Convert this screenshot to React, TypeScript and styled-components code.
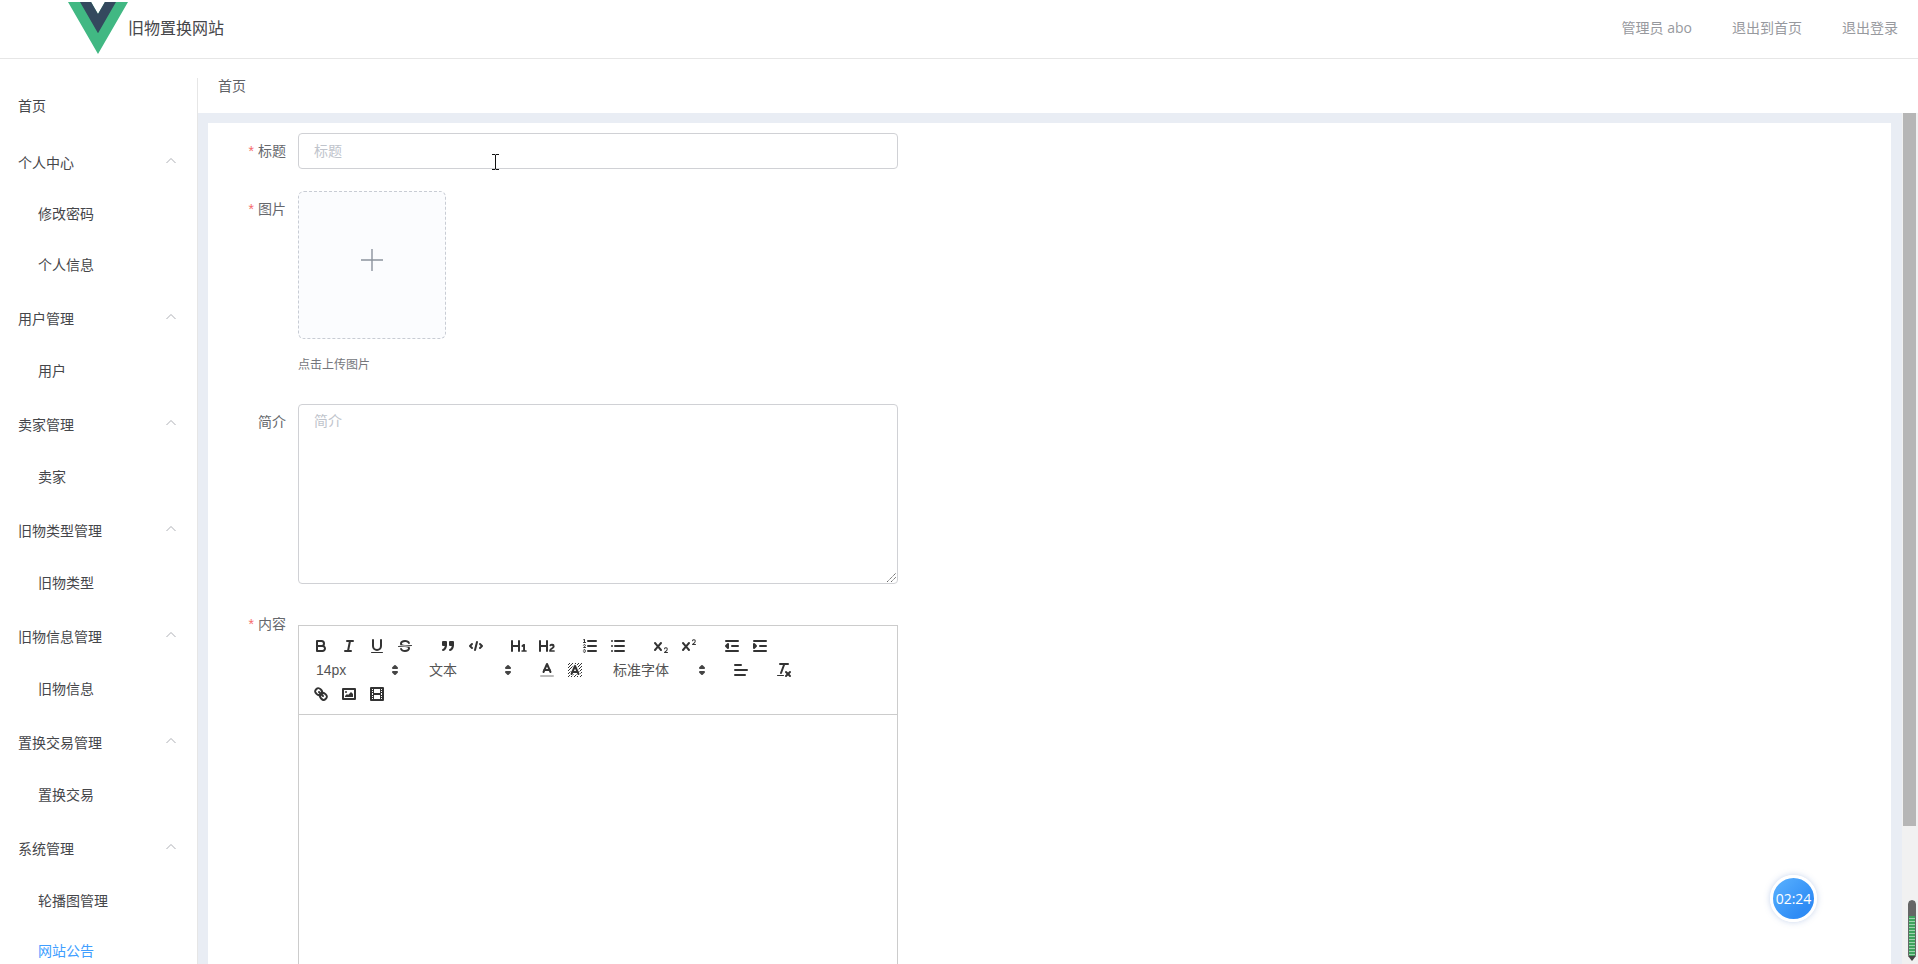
import React from 'react';
import styled, { createGlobalStyle } from 'styled-components';

const Global = createGlobalStyle`
  html, body { margin: 0; padding: 0; height: 100%; overflow: hidden; background: #fff; }
  body { font-family: "Liberation Sans", "Noto Sans CJK SC", sans-serif; }
  * { box-sizing: border-box; }
`;

const Page = styled.div`
  height: 964px; display: flex; flex-direction: column; position: relative; overflow: hidden;
`;
const Header = styled.header`
  height: 59px; flex: none; display: flex; align-items: flex-start; justify-content: space-between;
  border-bottom: 1px solid #e6e6e6; padding: 2px 20px 0 68px;
`;
const Brand = styled.div`display: flex; align-items: flex-start;`;
const Logo = styled.svg`width: 60px; height: 52px; display: block;`;
const BrandTitle = styled.div`font-size: 16px; line-height: 52px; color: #45464a; margin-top: 1px;`;
const HeaderLinks = styled.nav`display: flex; gap: 40px; margin-top: -3px;`;
const HeaderLink = styled.span`
  font-family: "Open Sans", "Noto Sans CJK SC", sans-serif; font-size: 14px; line-height: 58px; color: #97999e;
`;

const Body = styled.div`flex: 1; min-height: 0; display: flex; padding-top: 19px;`;
const Side = styled.aside`width: 198px; flex: none; border-right: 1px solid #e6e6e6; overflow: hidden;`;
const MenuItem = styled.div<{ $sub?: boolean; $active?: boolean }>`
  height: ${p => (p.$sub ? 51 : 56)}px; line-height: ${p => (p.$sub ? (p.$active ? 49 : 51) : 56)}px; font-size: 14px;
  padding-left: ${p => (p.$sub ? 38 : 18)}px; color: ${p => (p.$active ? '#409eff' : '#45464a')};
`;
const MenuTitle = styled.div<{ $first?: boolean }>`
  height: 55px; font-size: 14px; padding: 0 20px ${p => (p.$first ? 0 : 2)}px 18px; color: #45464a;
  display: flex; align-items: center; justify-content: space-between;
`;
const Chevron = styled.svg`width: 12px; height: 12px; margin-top: -1px; color: #a3a6ad;`;

const Main = styled.main`flex: 1; min-width: 0; display: flex; flex-direction: column;`;
const Crumb = styled.div`height: 35px; flex: none; padding-left: 20px; font-size: 14px; line-height: 16px; color: #606266;`;
const Band = styled.div`flex: 1; min-height: 0; display: flex;`;
const Gutter = styled.div`
  flex: 1; min-width: 0; background: #e9edf4; padding: 10px 11px 0 10px; display: flex;
`;
const Card = styled.div`flex: 1; background: #fff; padding: 10px 0 0 0; overflow: hidden;`;
const ScrollTrack = styled.div`width: 16px; flex: none; background: #f1f1f1; padding-left: 1px;`;
const ScrollThumb = styled.div`width: 13px; height: 713px; background: #b6b6b6;`;

const Row = styled.div`display: flex; margin-bottom: 22px;`;
const Label = styled.label`
  width: 78px; flex: none; text-align: right; font-size: 14px; line-height: 36px; color: #66686d;
`;
const Star = styled.span`color: #f56c6c; margin-right: 4px;`;
const Control = styled.div`margin-left: 12px; width: 600px; flex: none; position: relative;`;
const Input = styled.div`
  height: 36px; border: 1px solid #d0d1d5; border-radius: 4px; padding-left: 15px;
  font-size: 14px; line-height: 34px; color: #c0c4cc;
`;
const Upload = styled.div`
  width: 148px; height: 148px; border: 1px dashed #c8ccd4; border-radius: 6px; background: #fbfcfe;
  display: flex; align-items: center; justify-content: center; padding-bottom: 11px;
`;
const Tip = styled.div`font-size: 12px; line-height: 36px; height: 36px; margin-top: 8px; margin-bottom: -1px; color: #75777c;`;
const Textarea = styled.div`
  height: 180px; border: 1px solid #d0d1d5; border-radius: 4px; padding: 5px 15px;
  font-size: 14px; line-height: 22px; color: #c0c4cc; position: relative;
`;
const Grip = styled.svg`position: absolute; right: 0; bottom: 0; width: 12px; height: 12px;`;
const IBeam = styled.svg`position: absolute; left: 194px; top: 21px; width: 7px; height: 16px;`;

const Editor = styled.div`margin-top: 19px; border: 1px solid #ccc; height: 500px;`;
const Toolbar = styled.div`
  display: flex; flex-wrap: wrap; padding: 8px; border-bottom: 1px solid #ccc; height: 89px; align-content: flex-start;
`;
const Formats = styled.span`display: inline-flex; margin-right: 15px; height: 24px; align-items: center;`;
const Btn = styled.span`
  width: 28px; height: 24px; padding: 3px 5px; display: block; flex: none;
  & svg { display: block; width: 18px; height: 18px; overflow: visible; }
  & .s { fill: none; stroke: #333; stroke-width: 2; stroke-linecap: round; stroke-linejoin: round; }
  & .t { fill: none; stroke: #333; stroke-width: 1; stroke-linecap: round; stroke-linejoin: round; }
  & .f { fill: #333; stroke: none; }
  & .sf { fill: #333; stroke: #333; stroke-width: 2; stroke-linejoin: round; stroke-linecap: round; }
  & .c { fill: none; stroke: #bbb; stroke-width: 2; stroke-linecap: round; }
`;
const Picker = styled.span<{ $w: number }>`
  width: ${p => p.$w}px; height: 24px; padding-left: 9px; position: relative; display: block;
  font-size: 14px; line-height: 24px; color: #555;
  & svg { position: absolute; right: 1px; top: 3px; width: 18px; height: 18px; }
  & polygon { fill: #444; stroke: #444; stroke-width: 2; stroke-linejoin: round; }
`;
const Timer = styled.div`
  position: absolute; left: 1770px; top: 875px; width: 47px; height: 47px; border-radius: 50%;
  border: 3px solid #fff; box-shadow: 0 0 6px rgba(90, 130, 200, .35);
  background:
    radial-gradient(ellipse 22px 5px at 60% 108%, rgba(190, 225, 255, .9) 60%, transparent 64%),
    linear-gradient(135deg, #5ab2ff, #2f8cf5 75%);
  color: #fff; font-family: "Open Sans", sans-serif; font-size: 14px;
  display: flex; align-items: center; justify-content: center;
`;
const Meter = styled.div`
  position: absolute; left: 1908px; top: 900px; width: 8px; height: 57px; border-radius: 4px 4px 2px 2px;
  border: 1px solid #666; overflow: hidden;
  background: linear-gradient(#666 0 15px, transparent 15px),
    repeating-linear-gradient(#3fa45f 0 2px, #9dd3ae 2px 3px);
`;
const MeterArrow = styled.svg`position: absolute; left: 1908px; top: 956px; width: 8px; height: 5px;`;

const B = () => <svg viewBox="0 0 18 18"><path className="s" d="M5,4H9.5A2.5,2.5,0,0,1,12,6.5v0A2.5,2.5,0,0,1,9.5,9H5A0,0,0,0,1,5,9V4A0,0,0,0,1,5,4Z"/><path className="s" d="M5,9h5.5A2.5,2.5,0,0,1,13,11.5v0A2.5,2.5,0,0,1,10.5,14H5a0,0,0,0,1,0,0V9A0,0,0,0,1,5,9Z"/></svg>;
const I = () => <svg viewBox="0 0 18 18"><line className="s" x1="7" x2="13" y1="4" y2="4"/><line className="s" x1="5" x2="11" y1="14" y2="14"/><line className="s" x1="8" x2="10" y1="14" y2="4"/></svg>;
const U = () => <svg viewBox="0 0 18 18"><path className="s" d="M5,3V9a4.012,4.012,0,0,0,4,4H9a4.012,4.012,0,0,0,4-4V3"/><rect className="f" height="1" rx="0.5" ry="0.5" width="12" x="3" y="15"/></svg>;
const Strike = () => <svg viewBox="0 0 18 18"><line className="t" x1="15.5" x2="2.5" y1="8.5" y2="9.5"/><path className="f" d="M9.007,8C6.542,7.791,6,7.519,6,6.5,6,5.792,7.283,5,9,5c1.571,0,2.765.679,2.969,1.309a1,1,0,0,0,1.9-.617C13.356,4.106,11.354,3,9,3,6.2,3,4,4.538,4,6.5a3.2,3.2,0,0,0,.5,1.843Z"/><path className="f" d="M8.984,10C11.457,10.208,12,10.479,12,11.5c0,.708-1.283,1.5-3,1.5-1.571,0-2.765-.679-2.969-1.309a1,1,0,1,0-1.9.617C4.644,13.894,6.646,15,9,15c2.8,0,5-1.538,5-3.5a3.2,3.2,0,0,0-.5-1.843Z"/></svg>;
const Quote = () => <svg viewBox="0 0 18 18"><rect className="sf" height="3" width="3" x="4" y="5"/><rect className="sf" height="3" width="3" x="11" y="5"/><path className="sf" d="M7,8c0,4.031-3,5-3,5"/><path className="sf" d="M14,8c0,4.031-3,5-3,5"/></svg>;
const Code = () => <svg viewBox="0 0 18 18"><polyline className="s" points="5 7 3 9 5 11"/><polyline className="s" points="13 7 15 9 13 11"/><line className="s" x1="10" x2="8" y1="5" y2="13"/></svg>;
const H1 = () => <svg viewBox="0 0 18 18"><path className="f" d="M10,4V14a1,1,0,0,1-2,0V10H3v4a1,1,0,0,1-2,0V4A1,1,0,0,1,3,4V8H8V4a1,1,0,0,1,2,0Zm6.06787,9.209H14.98975V7.59863a.54085.54085,0,0,0-.605-.60547h-.62744a1.01119,1.01119,0,0,0-.748.29688L11.645,8.56641a.5435.5435,0,0,0-.022.8584l.28613.30762a.53861.53861,0,0,0,.84717.0332l.09912-.08789a1.2137,1.2137,0,0,0,.2417-.35254h.02246s-.01123.30859-.01123.60547V13.209H12.041a.54085.54085,0,0,0-.605.60547v.43945a.54085.54085,0,0,0,.605.60547h4.02686a.54085.54085,0,0,0,.605-.60547v-.43945A.54085.54085,0,0,0,16.06787,13.209Z"/></svg>;
const H2 = () => <svg viewBox="0 0 18 18"><path className="f" d="M16.73975,13.81445v.43945a.54085.54085,0,0,1-.605.60547H11.855a.58392.58392,0,0,1-.64893-.60547V14.0127c0-2.90527,3.39941-3.42187,3.39941-4.55469a.77675.77675,0,0,0-.84717-.78125,1.17684,1.17684,0,0,0-.83594.38477c-.2749.26367-.561.374-.85791.13184l-.4292-.34082c-.30811-.24219-.38525-.51758-.1543-.81445a2.97155,2.97155,0,0,1,2.45361-1.17676,2.45393,2.45393,0,0,1,2.68408,2.40918c0,2.45312-3.1792,2.92676-3.27832,3.93848h2.79443A.54085.54085,0,0,1,16.73975,13.81445ZM9,3A.99974.99974,0,0,0,8,4V8H3V4A1,1,0,0,0,1,4V14a1,1,0,0,0,2,0V10H8v4a1,1,0,0,0,2,0V4A.99974.99974,0,0,0,9,3Z"/></svg>;
const Ordered = () => <svg viewBox="0 0 18 18"><line className="s" x1="7" x2="15" y1="4" y2="4"/><line className="s" x1="7" x2="15" y1="9" y2="9"/><line className="s" x1="7" x2="15" y1="14" y2="14"/><line className="t" x1="2.5" x2="4.5" y1="5.5" y2="5.5"/><path className="f" d="M3.5,6A0.5,0.5,0,0,1,3,5.5V3.085l-0.276.138A0.5,0.5,0,0,1,2.053,3c-0.124-.247-0.023-0.324.224-0.447l1-.5A0.5,0.5,0,0,1,4,2.5v3A0.5,0.5,0,0,1,3.5,6Z"/><path className="t" d="M4.5,10.5h-2c0-.234,1.85-1.076,1.85-2.234A0.959,0.959,0,0,0,2.5,8.156"/><path className="t" d="M2.5,14.846a0.959,0.959,0,0,0,1.85-.109A0.7,0.7,0,0,0,3.75,14a0.688,0.688,0,0,0,.6-0.736,0.959,0.959,0,0,0-1.85-.109"/></svg>;
const Bullet = () => <svg viewBox="0 0 18 18"><line className="s" x1="6" x2="15" y1="4" y2="4"/><line className="s" x1="6" x2="15" y1="9" y2="9"/><line className="s" x1="6" x2="15" y1="14" y2="14"/><line className="s" x1="3" x2="3" y1="4" y2="4"/><line className="s" x1="3" x2="3" y1="9" y2="9"/><line className="s" x1="3" x2="3" y1="14" y2="14"/></svg>;
const Sub = () => <svg viewBox="0 0 18 18"><path className="f" d="M15.5,15H13.861a3.858,3.858,0,0,0,1.914-2.975,1.8,1.8,0,0,0-1.6-1.751A1.921,1.921,0,0,0,12.021,11.7a0.50013,0.50013,0,1,0,.957.291h0a0.914,0.914,0,0,1,1.053-.725,0.81,0.81,0,0,1,.744.762c0,1.076-1.16971,1.86982-1.93971,2.43082A1.45639,1.45639,0,0,0,12,15.5a0.5,0.5,0,0,0,.5.5h3A0.5,0.5,0,0,0,15.5,15Z"/><path className="f" d="M9.65,5.241a1,1,0,0,0-1.409.108L6,7.964,3.759,5.349A1,1,0,0,0,2.192,6.59178Q2.21541,6.6213,2.241,6.651L4.684,9.5,2.241,12.35A1,1,0,0,0,3.71,13.70722q0.02557-.02768.049-0.05722L6,11.036,8.241,13.65a1,1,0,1,0,1.567-1.24277Q9.78459,12.3777,9.759,12.35L7.316,9.5,9.759,6.651A1,1,0,0,0,9.65,5.241Z"/></svg>;
const Sup = () => <svg viewBox="0 0 18 18"><path className="f" d="M15.5,7H13.861a4.015,4.015,0,0,0,1.914-2.975,1.8,1.8,0,0,0-1.6-1.751A1.922,1.922,0,0,0,12.021,3.7a0.5,0.5,0,1,0,.957.291,0.917,0.917,0,0,1,1.053-.725,0.81,0.81,0,0,1,.744.762c0,1.077-1.164,1.925-1.934,2.486A1.423,1.423,0,0,0,12,7.5a0.5,0.5,0,0,0,.5.5h3A0.5,0.5,0,0,0,15.5,7Z"/><path className="f" d="M9.651,5.241a1,1,0,0,0-1.41.108L6,7.964,3.759,5.349a1,1,0,1,0-1.519,1.3L4.683,9.5,2.241,12.35a1,1,0,1,0,1.519,1.3L6,11.036,8.241,13.65a1,1,0,0,0,1.519-1.3L7.317,9.5,9.759,6.651A1,1,0,0,0,9.651,5.241Z"/></svg>;
const Outdent = () => <svg viewBox="0 0 18 18"><line className="s" x1="3" x2="15" y1="14" y2="14"/><line className="s" x1="3" x2="15" y1="4" y2="4"/><line className="s" x1="9" x2="15" y1="9" y2="9"/><polyline className="sf" points="5 7 5 11 3 9 5 7"/></svg>;
const Indent = () => <svg viewBox="0 0 18 18"><line className="s" x1="3" x2="15" y1="14" y2="14"/><line className="s" x1="3" x2="15" y1="4" y2="4"/><line className="s" x1="9" x2="15" y1="9" y2="9"/><polyline className="sf" points="3 7 3 11 5 9 3 7"/></svg>;
const Color = () => <svg viewBox="0 0 18 18"><line className="c" x1="3" x2="15" y1="15" y2="15"/><polyline className="s" points="5.5 11 9 3 12.5 11"/><line className="s" x1="11.63" x2="6.38" y1="9" y2="9"/></svg>;
const bgRects: [number, number][] = [[4,4],[2,6],[3,5],[4,7],[2,12],[2,9],[2,15],[3,8],[12,2],[11,3],[2,3],[6,2],[3,2],[5,3],[9,2],[15,14],[13,7],[15,5],[14,6],[15,8],[14,9],[14,3],[15,2],[12,5],[13,4],[9,14],[8,15],[5,15],[11,15],[14,15],[15,11]];
const Background = () => <svg viewBox="0 0 18 18"><g className="f"><polygon points="6 6.868 6 6 5 6 5 7 5.942 7 6 6.868"/><polygon points="6.817 5 6 5 6 6 6.38 6 6.817 5"/><polygon points="4 11.439 4 11 3 11 3 12 3.755 12 4 11.439"/><polygon points="4.63 10 4 10 4 11 4.192 11 4.63 10"/><path d="M10.832,4.2L11,4.582V4H10.708A1.948,1.948,0,0,1,10.832,4.2Z"/><path d="M7,4.582L7.168,4.2A1.929,1.929,0,0,1,7.292,4H7V4.582Z"/><path d="M8,13H7.683l-0.351.8a1.933,1.933,0,0,1-.124.2H8V13Z"/><path d="M9,3H8V3.282A1.985,1.985,0,0,1,9,3Z"/><polygon points="13.447 10.174 13.469 10.225 13.472 10.232 13.808 11 14 11 14 10 13.37 10 13.447 10.174"/><path d="M3.775,14H3v1H4V14.314A1.97,1.97,0,0,1,3.775,14Z"/><polygon points="12 6.868 12 6 11.62 6 12 6.868"/><polygon points="12.933 9 13 9 13 8 12.495 8 12.933 9"/><path d="M6,14.926V15H7V14.316A1.993,1.993,0,0,1,6,14.926Z"/><path d="M10.668,13.8L10.317,13H10v1h0.792A1.947,1.947,0,0,1,10.668,13.8Z"/><path d="M14.332,12.2a1.99,1.99,0,0,1,.166.8H15V12H14.245Z"/>{bgRects.map(([x, y]) => <rect key={`${x}-${y}`} x={x} y={y} width="1" height="1"/>)}</g><polyline className="s" points="5.5 13 9 5 12.5 13"/><line className="s" x1="11.63" x2="6.38" y1="11" y2="11"/></svg>;
const Align = () => <svg viewBox="0 0 18 18"><line className="s" x1="3" x2="15" y1="9" y2="9"/><line className="s" x1="3" x2="13" y1="14" y2="14"/><line className="s" x1="3" x2="9" y1="4" y2="4"/></svg>;
const Clean = () => <svg viewBox="0 0 18 18"><line className="s" x1="5" x2="13" y1="3" y2="3"/><line className="s" x1="6" x2="9.35" y1="12" y2="3"/><line className="s" x1="11" x2="15" y1="11" y2="15"/><line className="s" x1="15" x2="11" y1="11" y2="15"/><rect className="f" height="1" rx="0.5" ry="0.5" width="7" x="2" y="14"/></svg>;
const Link = () => <svg viewBox="0 0 18 18"><line className="s" x1="7" x2="11" y1="7" y2="11"/><path className="s" d="M8.9,4.577a3.476,3.476,0,0,1,.36,4.679A3.476,3.476,0,0,1,4.577,8.9C3.185,7.5,2.035,6.4,4.217,4.217S7.5,3.185,8.9,4.577Z"/><path className="s" d="M13.423,9.1a3.476,3.476,0,0,0-4.679-.36,3.476,3.476,0,0,0,.36,4.679c1.392,1.392,2.5,2.542,4.679.36S14.815,10.5,13.423,9.1Z"/></svg>;
const Image = () => <svg viewBox="0 0 18 18"><rect className="s" height="10" width="12" x="3" y="4"/><circle className="f" cx="6" cy="7" r="1"/><polyline className="f" points="5 12 5 11 7 9 8 10 11 7 13 9 13 12 5 12"/></svg>;
const Video = () => <svg viewBox="0 0 18 18"><rect className="s" height="12" width="12" x="3" y="3"/><rect className="f" height="12" width="1" x="5" y="3"/><rect className="f" height="12" width="1" x="12" y="3"/><rect className="f" height="2" width="8" x="5" y="8"/><rect className="f" height="1" width="3" x="3" y="5"/><rect className="f" height="1" width="3" x="3" y="7"/><rect className="f" height="1" width="3" x="3" y="10"/><rect className="f" height="1" width="3" x="3" y="12"/><rect className="f" height="1" width="3" x="12" y="5"/><rect className="f" height="1" width="3" x="12" y="7"/><rect className="f" height="1" width="3" x="12" y="10"/><rect className="f" height="1" width="3" x="12" y="12"/></svg>;
const Arrows = () => <svg viewBox="0 0 18 18"><polygon points="7 11 9 13 11 11 7 11"/><polygon points="7 7 9 5 11 7 7 7"/></svg>;

const Up = () => <Chevron viewBox="0 0 12 12"><polyline points="1.5 8 6 3.5 10.5 8" fill="none" stroke="currentColor" strokeWidth="0.9"/></Chevron>;

const menu: { title: string; subs: string[] }[] = [
  { title: '个人中心', subs: ['修改密码', '个人信息'] },
  { title: '用户管理', subs: ['用户'] },
  { title: '卖家管理', subs: ['卖家'] },
  { title: '旧物类型管理', subs: ['旧物类型'] },
  { title: '旧物信息管理', subs: ['旧物信息'] },
  { title: '置换交易管理', subs: ['置换交易'] },
  { title: '系统管理', subs: ['轮播图管理', '网站公告'] },
];

export default function App() {
  return (
    <Page>
      <Global />
      <Header>
        <Brand>
          <Logo viewBox="0 0 261.76 226.69">
            <path fill="#41B883" d="M161.096.001l-30.225 52.351L100.647.001H-.005l130.876 226.688L261.749.001z" />
            <path fill="#34495E" d="M161.096.001l-30.225 52.351L100.647.001H52.346l78.525 136.01L209.398.001z" />
          </Logo>
          <BrandTitle>旧物置换网站</BrandTitle>
        </Brand>
        <HeaderLinks>
          <HeaderLink>管理员 abo</HeaderLink>
          <HeaderLink>退出到首页</HeaderLink>
          <HeaderLink>退出登录</HeaderLink>
        </HeaderLinks>
      </Header>
      <Body>
        <Side>
          <MenuItem>首页</MenuItem>
          {menu.map((g, i) => (
            <div key={g.title}>
              <MenuTitle $first={i === 0}>{g.title}<Up /></MenuTitle>
              {g.subs.map(s => <MenuItem key={s} $sub $active={s === '网站公告'}>{s}</MenuItem>)}
            </div>
          ))}
        </Side>
        <Main>
          <Crumb>首页</Crumb>
          <Band>
            <Gutter>
              <Card>
                <Row>
                  <Label><Star>*</Star>标题</Label>
                  <Control>
                    <Input>标题</Input>
                    <IBeam viewBox="0 0 7 16"><path d="M0 .5h3l.5.5.5-.5h3M3.5 1v14M0 15.5h3l.5-.5.5.5h3" fill="none" stroke="#111" strokeWidth="1" /></IBeam>
                  </Control>
                </Row>
                <Row>
                  <Label><Star>*</Star>图片</Label>
                  <Control>
                    <Upload>
                      <svg width="24" height="24" viewBox="0 0 24 24"><path d="M12 1v22M1 12h22" stroke="#8c939d" strokeWidth="1.4" fill="none" /></svg>
                    </Upload>
                    <Tip>点击上传图片</Tip>
                  </Control>
                </Row>
                <Row>
                  <Label>简介</Label>
                  <Control>
                    <Textarea>
                      简介
                      <Grip viewBox="0 0 12 12"><path d="M2 11l9-9M6 11l5-5" stroke="#666" strokeWidth="1" fill="none" strokeDasharray="1.4 .6" /></Grip>
                    </Textarea>
                  </Control>
                </Row>
                <Row>
                  <Label><Star>*</Star>内容</Label>
                  <Control>
                    <Editor>
                      <Toolbar>
                        <Formats><Btn><B /></Btn><Btn><I /></Btn><Btn><U /></Btn><Btn><Strike /></Btn></Formats>
                        <Formats><Btn><Quote /></Btn><Btn><Code /></Btn></Formats>
                        <Formats><Btn><H1 /></Btn><Btn><H2 /></Btn></Formats>
                        <Formats><Btn><Ordered /></Btn><Btn><Bullet /></Btn></Formats>
                        <Formats><Btn><Sub /></Btn><Btn><Sup /></Btn></Formats>
                        <Formats><Btn><Outdent /></Btn><Btn><Indent /></Btn></Formats>
                        <Formats><Picker $w={98}>14px<Arrows /></Picker></Formats>
                        <Formats><Picker $w={98}>文本<Arrows /></Picker></Formats>
                        <Formats><Btn><Color /></Btn><Btn><Background /></Btn></Formats>
                        <Formats><Picker $w={108}>标准字体<Arrows /></Picker></Formats>
                        <Formats><Btn><Align /></Btn></Formats>
                        <Formats><Btn><Clean /></Btn></Formats>
                        <Formats><Btn><Link /></Btn><Btn><Image /></Btn><Btn><Video /></Btn></Formats>
                      </Toolbar>
                    </Editor>
                  </Control>
                </Row>
              </Card>
            </Gutter>
            <ScrollTrack><ScrollThumb /></ScrollTrack>
          </Band>
        </Main>
      </Body>
      <Timer>02:24</Timer>
      <Meter />
      <MeterArrow viewBox="0 0 8 5"><path d="M0 0h8L4 5z" fill="#444" /></MeterArrow>
    </Page>
  );
}
